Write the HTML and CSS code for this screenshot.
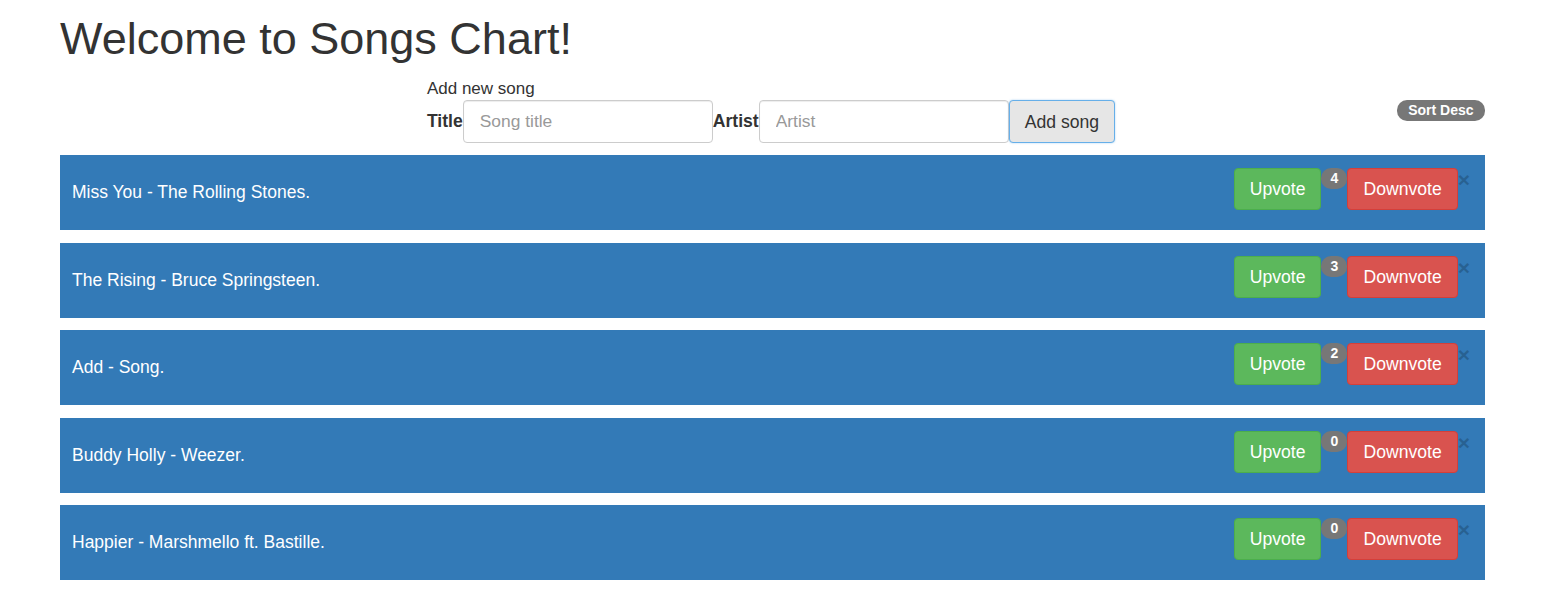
FILE: index.html
```html
<!DOCTYPE html>
<html>
<head>
<meta charset="utf-8">
<link rel="stylesheet" href="styles.css">
</head>
<body>
<div class="container">
  <h1 class="title">Welcome to Songs Chart!</h1>
  <div class="toolbar">
    <div></div>
    <form class="add-form">
      <div class="form-caption">Add new song</div>
      <div class="form-row">
        <label class="form-label">Title</label>
        <input class="form-input" type="text" placeholder="Song title">
        <label class="form-label">Artist</label>
        <input class="form-input" type="text" placeholder="Artist">
        <button class="btn btn-default" type="button">Add song</button>
      </div>
    </form>
    <div class="sort-cell"><span class="badge badge-sort">Sort Desc</span></div>
  </div>
  <ul class="song-list">
    <li class="song">
      <span class="song-name">Miss You - The Rolling Stones.</span>
      <div class="song-actions">
        <button class="btn btn-success" type="button">Upvote</button>
        <span class="badge badge-votes">4</span>
        <button class="btn btn-danger" type="button">Downvote</button>
        <span class="close">&times;</span>
      </div>
    </li>
    <li class="song">
      <span class="song-name">The Rising - Bruce Springsteen.</span>
      <div class="song-actions">
        <button class="btn btn-success" type="button">Upvote</button>
        <span class="badge badge-votes">3</span>
        <button class="btn btn-danger" type="button">Downvote</button>
        <span class="close">&times;</span>
      </div>
    </li>
    <li class="song">
      <span class="song-name">Add - Song.</span>
      <div class="song-actions">
        <button class="btn btn-success" type="button">Upvote</button>
        <span class="badge badge-votes">2</span>
        <button class="btn btn-danger" type="button">Downvote</button>
        <span class="close">&times;</span>
      </div>
    </li>
    <li class="song">
      <span class="song-name">Buddy Holly - Weezer.</span>
      <div class="song-actions">
        <button class="btn btn-success" type="button">Upvote</button>
        <span class="badge badge-votes">0</span>
        <button class="btn btn-danger" type="button">Downvote</button>
        <span class="close">&times;</span>
      </div>
    </li>
    <li class="song">
      <span class="song-name">Happier - Marshmello ft. Bastille.</span>
      <div class="song-actions">
        <button class="btn btn-success" type="button">Upvote</button>
        <span class="badge badge-votes">0</span>
        <button class="btn btn-danger" type="button">Downvote</button>
        <span class="close">&times;</span>
      </div>
    </li>
  </ul>
</div>
</body>
</html>
```
FILE: styles.css
```css
* { box-sizing: border-box; }

body {
  margin: 0;
  font-family: "Liberation Sans", Arial, sans-serif;
  font-size: 18px;
  color: #333;
  background: #fff;
}

.container {
  margin: 0 63px 0 60px;
}

.title {
  margin: 0;
  padding-top: 14px;
  font-size: 45px;
  font-weight: 500;
  line-height: 50px;
}

.toolbar {
  display: grid;
  grid-template-columns: 1fr auto 1fr;
  margin-top: 13px;
}

.add-form {
  margin: 0 3px 0 0;
}

.form-caption {
  font-size: 17px;
  line-height: 23px;
}

.form-row {
  display: flex;
  align-items: center;
}

.form-label {
  font-weight: bold;
  font-size: 17.6px;
}

.form-input {
  width: 250px;
  height: 43px;
  padding: 8px 16px;
  font-family: inherit;
  font-size: 17.4px;
  color: #555;
  border: 1px solid #ccc;
  border-radius: 4px;
  box-shadow: inset 0 1px 1px rgba(0,0,0,.075);
}

.form-input::placeholder { color: #999; }

.sort-cell {
  display: flex;
  justify-content: flex-end;
  align-items: flex-start;
  padding-top: 23px;
}

.btn {
  font-family: inherit;
  font-size: 17.6px;
  line-height: 24px;
  padding: 8px 15px;
  border: 1px solid transparent;
  border-radius: 4px;
  height: 42px;
  cursor: pointer;
}

.btn-default {
  height: 43px;
  color: #333;
  background: #e6e6e6;
  border-color: #66afe9;
  box-shadow: 0 0 2px rgba(102,175,233,.6);
}

.btn-success {
  color: #fff;
  background: #5cb85c;
  border-color: #4cae4c;
}

.btn-danger {
  color: #fff;
  background: #d9534f;
  border-color: #d43f3a;
}

.badge {
  display: inline-block;
  background: #777;
  color: #fff;
  font-weight: bold;
  border-radius: 10px;
  text-align: center;
}

.badge-sort {
  font-size: 14px;
  line-height: 21px;
  padding: 0 11.5px;
}

.badge-votes {
  font-size: 14px;
  line-height: 21px;
  min-width: 26px;
  padding: 0 7px;
}

.song-list {
  list-style: none;
  margin: 12px 0 0;
  padding: 0;
}

.song {
  display: flex;
  justify-content: space-between;
  align-items: center;
  height: 75px;
  margin-bottom: 12.5px;
  padding: 0 15px 0 12px;
  background: #337ab7;
  color: #fff;
}

.song-name {
  font-size: 17.5px;
}

.song-actions {
  display: flex;
  align-items: flex-start;
  align-self: flex-start;
  margin-top: 13px;
}

.close {
  font-size: 21px;
  font-weight: bold;
  line-height: 1;
  color: #000;
  opacity: .2;
  margin-top: 1px;
}
```
